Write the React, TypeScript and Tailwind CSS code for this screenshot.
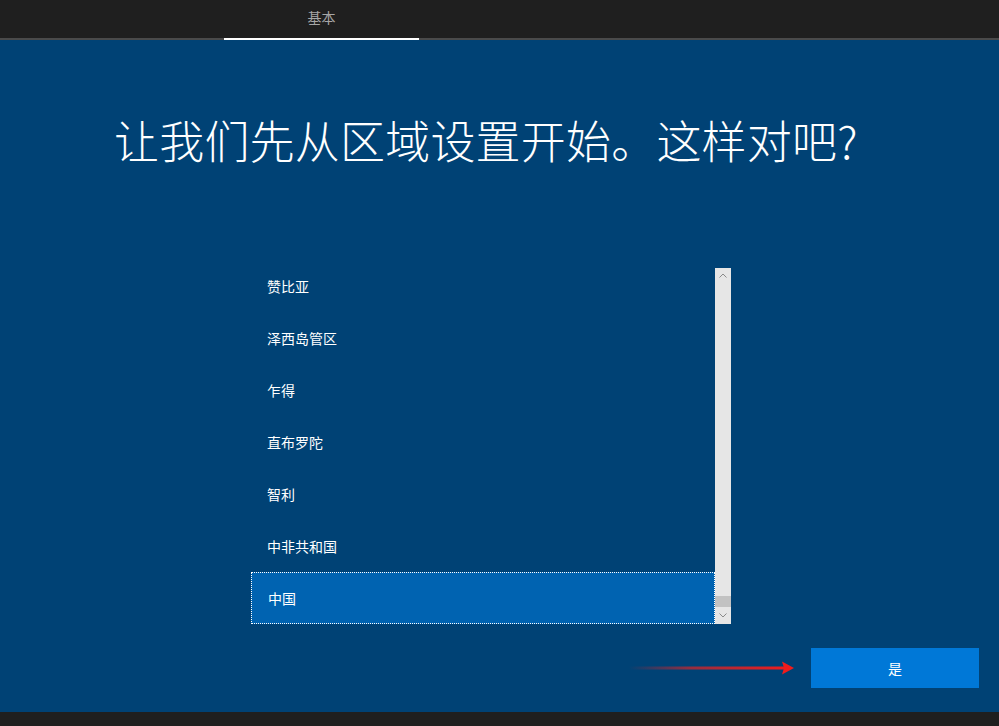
import React from "react";

const items = ["赞比亚", "泽西岛管区", "乍得", "直布罗陀", "智利", "中非共和国", "中国"];

export default function App() {
  return (
    <div
      className="w-[999px] h-[726px] flex flex-col bg-[#004275] overflow-hidden"
      style={{ fontFamily: '"Noto Sans CJK SC", "Noto Sans", sans-serif' }}
    >
      <div className="h-[40px] bg-[#1f1f1f] border-b-2 border-[#4a4a4a] flex shrink-0">
        <div className="ml-[224px] w-[195px] h-[40px] border-b-2 border-white flex items-center justify-center">
          <span className="text-[14px] text-[#a6a6a6] -mt-[4px]">基本</span>
        </div>
      </div>
      <div className="flex-1 flex flex-col">
        <h1 className="pl-[114px] pt-[70px] text-[45px] leading-[60px] font-light text-white tracking-[0.2px]">
          让我们先从区域设置开始。这样对吧?
        </h1>
        <div className="mt-[98px] ml-[251px] w-[480px] h-[356px] flex">
          <div className="flex-1 overflow-hidden">
            <div className="-mt-[8px]">
              {items.map((t, i) => (
                <div
                  key={t}
                  className={
                    "h-[52px] flex items-center pl-[16px] text-[14px] text-white " +
                    (i === items.length - 1
                      ? "bg-[#0063b1] border border-dotted border-white pl-[15px]"
                      : "")
                  }
                >
                  {t}
                </div>
              ))}
            </div>
          </div>
          <div className="w-[16px] bg-[#e6e6e6] flex flex-col items-center">
            <svg width="16" height="16" viewBox="0 0 16 16" className="shrink-0">
              <path d="M4.5 9.5 L8 6 L11.5 9.5" fill="none" stroke="#8a8a8a" strokeWidth="1" />
            </svg>
            <div className="flex-1" />
            <div className="w-[16px] h-[11px] bg-[#c2c2c2]" />
            <svg width="16" height="17" viewBox="0 0 16 17" className="shrink-0">
              <path d="M4.5 6.5 L8 10 L11.5 6.5" fill="none" stroke="#8a8a8a" strokeWidth="1" />
            </svg>
          </div>
        </div>
        <div className="mt-[24px] flex items-center justify-end pr-[20px]">
          <svg width="170" height="14" viewBox="0 0 170 14" className="mr-[14px]">
            <defs>
              <linearGradient id="arr" x1="0" y1="0" x2="1" y2="0">
                <stop offset="0" stopColor="#e82222" stopOpacity="0" />
                <stop offset="0.4" stopColor="#e82222" stopOpacity="0.65" />
                <stop offset="1" stopColor="#f01c1c" stopOpacity="1" />
              </linearGradient>
            </defs>
            <rect x="2" y="5.5" width="158" height="3" fill="url(#arr)" />
            <path d="M155 0.5 L167 7 L155 13.5 L157 7 Z" fill="#f01c1c" />
          </svg>
          <button className="w-[168px] h-[40px] bg-[#0078d7] text-white text-[14px] flex items-center justify-center">
            是
          </button>
        </div>
      </div>
      <div className="h-[14px] bg-[#1f1f1f] shrink-0" />
    </div>
  );
}
